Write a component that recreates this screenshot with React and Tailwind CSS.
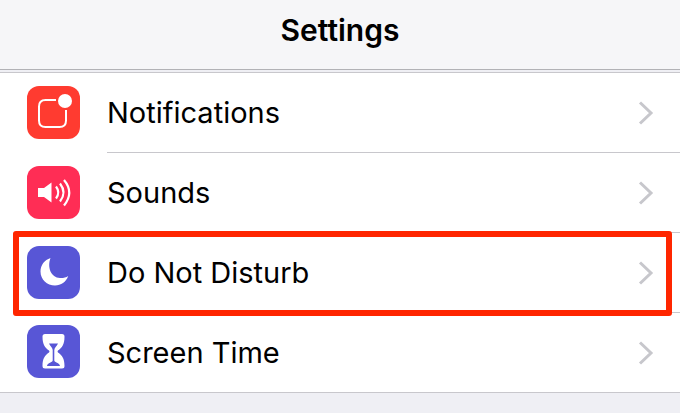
import React from "react";

function NotificationsIcon() {
  return (
    <svg viewBox="0 0 53 53" className="w-full h-full" aria-hidden="true">
      <path
        d="M29 14H18.5Q12 14 12 20.500V34.500Q12 41 18.500 41H32.500Q39 41 39 34.500V24"
        fill="none"
        stroke="#fff"
        strokeWidth="2"
      />
      <circle cx="38" cy="15" r="7" fill="#fff" />
    </svg>
  );
}

function SoundsIcon() {
  return (
    <svg viewBox="0 0 53 53" className="w-full h-full" aria-hidden="true">
      <path d="M11 22H17L24.500 16.500V36.500L17 31H11Z" fill="#fff" />
      <g fill="none" stroke="#fff" strokeWidth="2.200">
        <path d="M29 20.500Q33.500 26.500 29 32.500" />
        <path d="M33 17.500Q40 26.500 33 35.500" />
        <path d="M37 14Q47.500 26.500 37 39.500" />
      </g>
    </svg>
  );
}

function MoonIcon() {
  return (
    <svg viewBox="0 0 53 53" className="w-full h-full" aria-hidden="true">
      <path
        d="M23.500 12C20 21.500 24 31.500 33 32C36 32.200 39 31.500 41.200 30C39 36 34 39.500 28 39.500C20 39.500 13.500 33.500 13.500 25.500C13.500 19 17.500 14 23.500 12Z"
        fill="#fff"
      />
    </svg>
  );
}

function HourglassIcon() {
  return (
    <svg viewBox="0 0 53 53" className="w-full h-full" aria-hidden="true">
      <path
        d="M18 9H35Q37.500 9 37.500 11.500C37.500 20 35 22.500 31 25.500Q30 26.500 31 27.500C35 30.500 37.500 33 37.500 41Q37.500 43.500 35 43.500H18Q15.500 43.500 15.500 41C15.500 33 18 30.500 22 27.500Q23 26.500 22 25.500C18 22.500 15.500 20 15.500 11.500Q15.500 9 18 9Z"
        fill="#fff"
      />
      <path
        d="M22 18.500H31C30 21 27.500 22.500 27.300 25V35.500C27.500 37.500 32.500 37.500 33 41H20C20.500 37.500 25.500 37.500 25.700 35.500V25C25.500 22.500 23 21 22 18.500Z"
        fill="#5856d6"
      />
    </svg>
  );
}

function Chevron() {
  return (
    <svg viewBox="0 0 16 24" className="w-4 h-6 shrink-0" aria-hidden="true">
      <path
        d="M2 1.500L13 12L2 22.500"
        fill="none"
        stroke="#c7c7cc"
        strokeWidth="3"
      />
    </svg>
  );
}

const items = [
  { label: "Notifications", color: "bg-[#ff3b30]", Icon: NotificationsIcon },
  { label: "Sounds", color: "bg-[#ff2d55]", Icon: SoundsIcon },
  {
    label: "Do Not Disturb",
    color: "bg-[#5856d6]",
    Icon: MoonIcon,
    highlighted: true,
  },
  { label: "Screen Time", color: "bg-[#5856d6]", Icon: HourglassIcon },
];

export default function App() {
  return (
    <div className="min-h-screen bg-[#efeff4] text-black font-['Inter','Liberation_Sans',sans-serif]">
      <header className="flex justify-center pt-2 pb-4 bg-[#f6f6f8] border-b border-[#b2b2b6]">
        <h1 className="text-[30px] leading-[45px] font-semibold">Settings</h1>
      </header>

      <ul className="mt-0.5 bg-white border-y border-[#c8c7cc]">
        {items.map(({ label, color, Icon, highlighted }, idx) => (
          <li key={label} className="relative">
            <button
              type="button"
              className="flex items-stretch w-full pl-[27px] text-left cursor-pointer"
            >
              <span className="flex items-center mr-[27px] pb-0.5">
                <span
                  className={`w-[53px] h-[53px] rounded-xl overflow-hidden ${color}`}
                >
                  <Icon />
                </span>
              </span>
              <span
                className={`flex items-center justify-between flex-1 pr-[26px] ${
                  idx < items.length - 1
                    ? "h-20 border-b border-[#c8c7cc]"
                    : "h-[79px]"
                }`}
              >
                <span className="text-[29px] leading-9">{label}</span>
                <Chevron />
              </span>
            </button>
            {highlighted && (
              <div className="absolute -top-0.5 -bottom-[3px] left-[13px] right-2 border-6 border-[#ff2600] rounded-[3px] pointer-events-none" />
            )}
          </li>
        ))}
      </ul>
    </div>
  );
}
